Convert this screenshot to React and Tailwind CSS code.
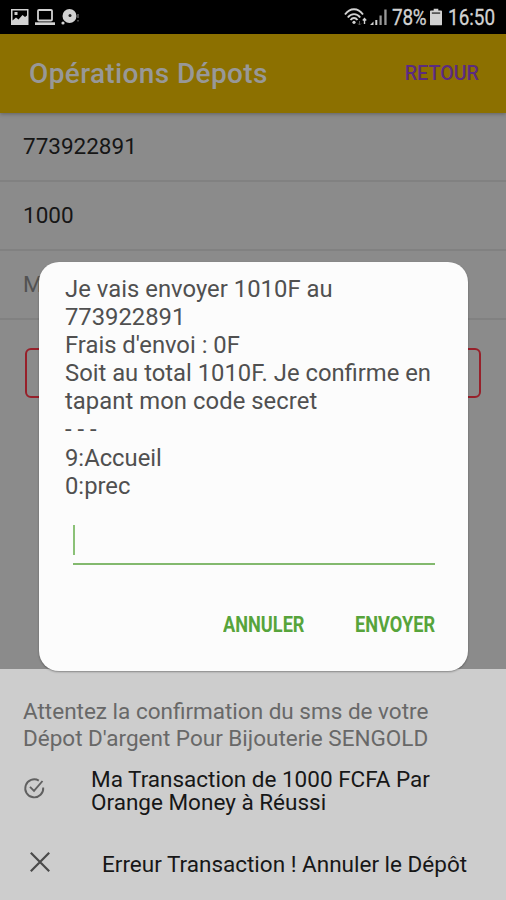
import React from 'react';

const fields = [
    { value: '773922891', className: 'text-[#161616]' },
    { value: '1000', className: 'text-[#161616]' },
    { value: 'M', className: 'text-[#525252]' }
];

const message = [
    { text: 'Je vais envoyer 1010F au', className: 'tracking-[0.040px]' },
    { text: '773922891', className: 'tracking-[0px]' },
    { text: "Frais d'envoi : 0F", className: 'tracking-[0px]' },
    { text: 'Soit au total 1010F. Je confirme en', className: 'tracking-[0px]' },
    { text: 'tapant mon code secret', className: 'tracking-[0.060px]' },
    { text: '- - -', className: 'tracking-[0px]' },
    { text: '9:Accueil', className: 'tracking-[0px]' },
    { text: '0:prec', className: 'tracking-[0px]' }
];

const StatusBar = () => (
    <div className="flex h-[34px] items-center justify-between bg-black pl-[11px] pr-[11px] text-[#d2d2d2]">
        <div className="flex items-center gap-[6px]">
            <svg className="h-4 w-[18px]" viewBox="0 0 18 16">
                <path fill="currentColor" fillRule="evenodd" d="M0 0h17.500v16H0V0Zm1.500 1.500v10l3.500-3 2.500 2 4-4.500 2.500 2 2-1.500v-5H1.500Zm2 1.500h3v3h-3V3Z" />
            </svg>
            <svg className="h-4 w-5" viewBox="0 0 20 16">
                <rect x="3" y="1" width="14" height="10.500" rx="1" fill="none" stroke="currentColor" strokeWidth="1.800" />
                <path fill="currentColor" d="M0 13.300h20V16H0z" />
            </svg>
            <svg className="h-4 w-[19px]" viewBox="0 0 19 16">
                <circle cx="8.500" cy="7" r="7" fill="currentColor" />
                <circle cx="9" cy="6.500" r="1.500" fill="#222" />
                <circle cx="2" cy="14" r="1.600" fill="currentColor" />
                <path d="M17 5v4M17 11v1.500" stroke="#777" strokeWidth="1.200" />
            </svg>
        </div>
        <div className="flex items-center">
            <svg className="h-5 w-[23px]" viewBox="0 0 23 20" fill="none" stroke="currentColor" strokeWidth="1.900">
                <path d="M1 7.500C6 .5 14 .5 19 7.500M3.800 10.500c3.500-4.500 9-4.500 12.400 0M6.500 13c2-2.700 5-2.700 7 0" />
                <circle cx="10" cy="15.300" r="1.600" fill="currentColor" stroke="none" />
                <path d="M15.500 14v4M14 16.500l1.500 1.500 1.500-1.500" stroke="#555" strokeWidth="1" />
                <path d="M20.500 17v-5.500M18.800 13.500l1.700-2 1.700 2" strokeWidth="1.400" />
            </svg>
            <svg className="ml-[3px] h-5 w-[18px]" viewBox="0 0 18 20">
                <path fill="currentColor" d="M0 18l3.500-3.500V18zM5.300 13h2v5h-2z" />
                <path fill="#999" d="M9.500 8.500h2.200V18H9.500zM14.300 2.500h2.300V18h-2.300z" />
            </svg>
            <div className="ml-[4px] flex h-[34px] w-[35px] items-center">
                <span className="origin-left whitespace-nowrap text-[22px] tracking-[-0.300px] scale-x-[0.860] [-webkit-text-stroke:0.3px_#d2d2d2]">78%</span>
            </div>
            <svg className="ml-[3px] h-[18px] w-[12px]" viewBox="0 0 13 18">
                <path fill="currentColor" d="M4 0h5v2h3a1 1 0 0 1 1 1v14a1 1 0 0 1-1 1H1a1 1 0 0 1-1-1V3a1 1 0 0 1 1-1h3z" />
                <path fill="#333" d="M2 4h9v1.500H2z" />
            </svg>
            <div className="ml-[6px] flex h-[34px] w-[47px] items-center">
                <span className="origin-left scale-x-[0.860] whitespace-nowrap text-[22px] [-webkit-text-stroke:0.3px_#d2d2d2]">16:50</span>
            </div>
        </div>
    </div>
);

const Header = () => (
    <div className="flex h-[79px] items-center justify-between bg-[#8c7000] pl-[29px] pr-[27px] shadow-[0_1px_4px_rgba(0,0,0,0.3)]">
        <h1 className="text-[28px] font-medium tracking-[0.370px] text-[#989898]">Opérations Dépots</h1>
        <button className="text-[19.700px] font-medium text-[#5b2b80]">RETOUR</button>
    </div>
);

const Dialog = () => (
    <div className="absolute left-[39px] top-[262px] flex h-[409px] w-[429px] flex-col rounded-[20px] bg-[#fcfcfc] pl-[26px] pr-[33px] pt-[13px] shadow-[0_1px_2px_rgba(0,0,0,0.35)]">
        <div className="text-[23.800px] leading-[28.100px] text-[#505050]">
            {message.map((line) => (
                <p key={line.text} className={`whitespace-nowrap ${line.className}`}>{line.text}</p>
            ))}
        </div>
        <div className="ml-[8px] mt-[25.200px] flex h-[40px] w-[362px] border-b-2 border-[#83b96e]">
            <div className="h-[30px] w-[2px] bg-[#8bc177]" />
        </div>
        <div className="mt-[44px] flex h-8 items-center justify-end gap-[50px] text-[21.500px] font-bold text-[#57a43b]">
            <button className="flex w-[82px]">
                <span className="origin-left scale-x-[0.845] whitespace-nowrap">ANNULER</span>
            </button>
            <button className="flex w-[80px]">
                <span className="origin-left scale-x-[0.845] whitespace-nowrap">ENVOYER</span>
            </button>
        </div>
    </div>
);

const ConfirmSheet = () => (
    <div className="h-[231px] bg-[#cdcdcd] pl-[23px] pt-[29px]">
        <div className="whitespace-nowrap text-[22.500px] leading-[26.500px] text-[#686868]">
            <p>Attentez la confirmation du sms de votre</p>
            <p>Dépot D'argent Pour Bijouterie SENGOLD</p>
        </div>
        <div className="mt-[17px] flex text-[22.500px] leading-[23px] text-[#171717]">
            <svg className="mt-[9px] h-[22px] w-[22px]" viewBox="0 0 22 22" fill="none" stroke="#606060" strokeWidth="1.900">
                <path d="M15.800 3.600A9 9 0 1 0 20.200 10.500M7 9.800l4 4L19.500 4" />
            </svg>
            <div className="ml-[46px] whitespace-nowrap">
                <p>Ma Transaction de 1000 FCFA Par</p>
                <p>Orange Money à Réussi</p>
            </div>
        </div>
        <div className="mt-[35px] flex h-[32px] items-center text-[22.500px] text-[#171717]">
            <svg className="mb-[7px] ml-[7px] h-5 w-5" viewBox="0 0 20 20" fill="none" stroke="#4a4a4a" strokeWidth="2.200">
                <path d="M.8 .8l18.400 18.400M19.200 .8L.8 19.200" />
            </svg>
            <p className="ml-[52px] whitespace-nowrap">Erreur Transaction ! Annuler le Dépôt</p>
        </div>
    </div>
);

const App = () => {
    return (
        <div className="relative flex h-[900px] w-[506px] flex-col overflow-hidden bg-[#8b8b8b] font-['Roboto',sans-serif]">
            <StatusBar />
            <Header />
            <div className="flex-1">
                {fields.map((field) => (
                    <div key={field.value} className="flex h-[69px] items-center border-b-2 border-[#818181] pl-[23px] text-[22.500px]">
                        <span className={field.className}>{field.value}</span>
                    </div>
                ))}
                <div className="mx-[25px] mt-[28px] h-[50px] rounded-[6px] border-2 border-[#97202a]" />
            </div>
            <ConfirmSheet />
            <Dialog />
        </div>
    );
};

export default App;
